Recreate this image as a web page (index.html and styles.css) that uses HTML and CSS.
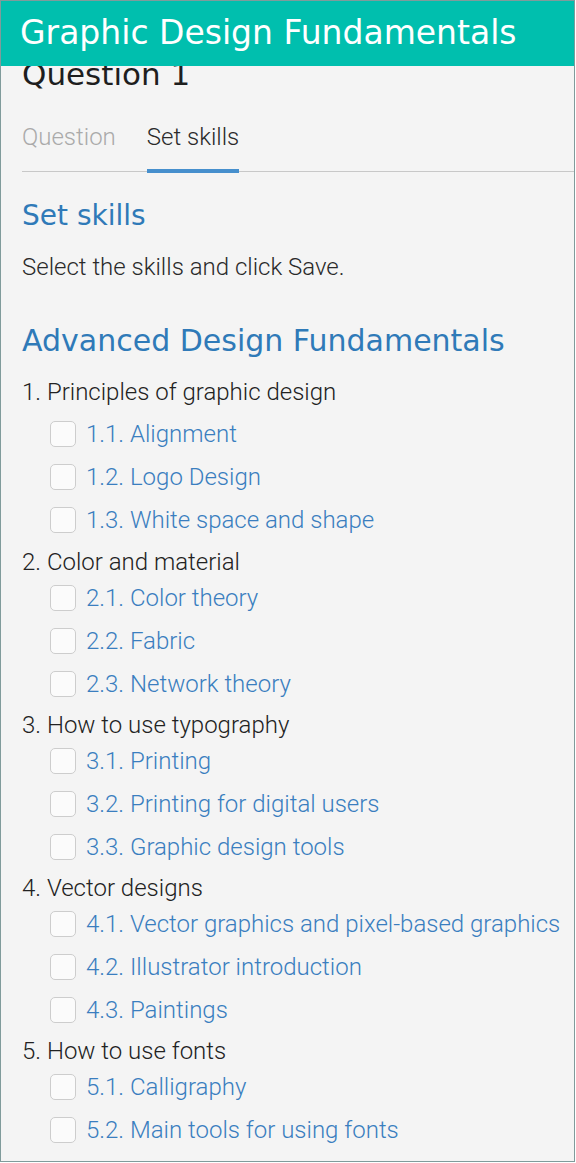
FILE: index.html
```html
<!DOCTYPE html>
<html lang="en">
<head>
<meta charset="utf-8">
<title>Graphic Design Fundamentals</title>
<link rel="stylesheet" href="styles.css">
</head>
<body>
<div class="frame">
  <header class="appbar">
    <h1 class="appbar-title">Graphic Design Fundamentals</h1>
  </header>
  <main class="content">
    <h2 class="page-title">Question 1</h2>
    <nav class="tabs">
      <span class="tab">Question</span>
      <span class="tab tab-active">Set skills</span>
    </nav>
    <h3 class="section-title">Set skills</h3>
    <p class="hint">Select the skills and click Save.</p>
    <h3 class="course-title">Advanced Design Fundamentals</h3>

    <div class="group group-first">
      <div class="cat">1. Principles of graphic design</div>
      <ul class="subs">
        <li class="sub"><span class="cb"></span><span class="sub-label">1.1. Alignment</span></li>
        <li class="sub"><span class="cb"></span><span class="sub-label">1.2. Logo Design</span></li>
        <li class="sub"><span class="cb"></span><span class="sub-label">1.3. White space and shape</span></li>
      </ul>
    </div>
    <div class="group">
      <div class="cat">2. Color and material</div>
      <ul class="subs">
        <li class="sub"><span class="cb"></span><span class="sub-label">2.1. Color theory</span></li>
        <li class="sub"><span class="cb"></span><span class="sub-label">2.2. Fabric</span></li>
        <li class="sub"><span class="cb"></span><span class="sub-label">2.3. Network theory</span></li>
      </ul>
    </div>
    <div class="group">
      <div class="cat">3. How to use typography</div>
      <ul class="subs">
        <li class="sub"><span class="cb"></span><span class="sub-label">3.1. Printing</span></li>
        <li class="sub"><span class="cb"></span><span class="sub-label">3.2. Printing for digital users</span></li>
        <li class="sub"><span class="cb"></span><span class="sub-label">3.3. Graphic design tools</span></li>
      </ul>
    </div>
    <div class="group">
      <div class="cat">4. Vector designs</div>
      <ul class="subs">
        <li class="sub"><span class="cb"></span><span class="sub-label">4.1. Vector graphics and pixel-based graphics</span></li>
        <li class="sub"><span class="cb"></span><span class="sub-label">4.2. Illustrator introduction</span></li>
        <li class="sub"><span class="cb"></span><span class="sub-label">4.3. Paintings</span></li>
      </ul>
    </div>
    <div class="group">
      <div class="cat">5. How to use fonts</div>
      <ul class="subs">
        <li class="sub"><span class="cb"></span><span class="sub-label">5.1. Calligraphy</span></li>
        <li class="sub"><span class="cb"></span><span class="sub-label">5.2. Main tools for using fonts</span></li>
      </ul>
    </div>
  </main>
</div>
</body>
</html>
```

FILE: styles.css
```css
* { box-sizing: border-box; }
html, body { margin: 0; padding: 0; }
body {
  background: #ffffff;
  font-family: Roboto, "Liberation Sans", sans-serif;
  font-weight: 300;
  color: #222;
}
.frame {
  position: relative;
  width: 575px;
  height: 1162px;
  border: 1px solid #809b9b;
  background: #f4f4f4;
  overflow: hidden;
}
.appbar {
  position: absolute;
  top: 0;
  left: 0;
  right: 0;
  height: 65px;
  background: #00bfae;
  z-index: 2;
}
.appbar-title {
  margin: 0;
  padding-left: 19px;
  font-family: "DejaVu Sans", sans-serif;
  font-weight: 400;
  font-size: 33px;
  line-height: 64px;
  color: #fff;
  white-space: nowrap;
}
.content {
  padding: 55px 0 0 21px;
}
.page-title {
  margin: 0;
  font-family: "DejaVu Sans", sans-serif;
  font-weight: 400;
  font-size: 31px;
  line-height: 36px;
  color: #1e1e1e;
}
.tabs {
  display: flex;
  gap: 31px;
  margin-top: 31px;
  border-bottom: 1px solid #c8c8c8;
}
.tab {
  position: relative;
  font-size: 24px;
  line-height: 28px;
  padding-bottom: 20px;
  color: #aaaaaa;
}
.tab-active { color: #2a2a2a; }
.tab-active::after {
  content: "";
  position: absolute;
  left: 0;
  right: 0;
  bottom: -2px;
  height: 4px;
  background: #468fcd;
}
.section-title {
  margin: 27px 0 0;
  font-family: "DejaVu Sans", sans-serif;
  font-weight: 400;
  font-size: 28px;
  line-height: 34px;
  color: #2f7ab8;
}
.hint {
  margin: 20px 0 0;
  font-size: 24px;
  line-height: 28px;
  color: #2a2a2a;
}
.course-title {
  margin: 42px 0 0;
  font-family: "DejaVu Sans", sans-serif;
  font-weight: 400;
  font-size: 30px;
  line-height: 36px;
  color: #2f7ab8;
}
.group { margin-bottom: 6px; }
.group-first { margin-top: 19px; margin-bottom: 7px; }
.cat {
  font-size: 24px;
  line-height: 28px;
  color: #222;
}
.subs {
  list-style: none;
  margin: 0;
  padding: 0 0 0 28px;
}
.group-first .subs { padding-top: 6px; }
.sub {
  display: flex;
  align-items: center;
  height: 43px;
}
.cb {
  width: 26px;
  height: 26px;
  flex: none;
  border: 1px solid #cdcdcd;
  border-radius: 5px;
  background: #fbfbfb;
}
.sub-label {
  margin-left: 10px;
  font-size: 24px;
  line-height: 28px;
  color: #3a7ebf;
  white-space: nowrap;
}
```
